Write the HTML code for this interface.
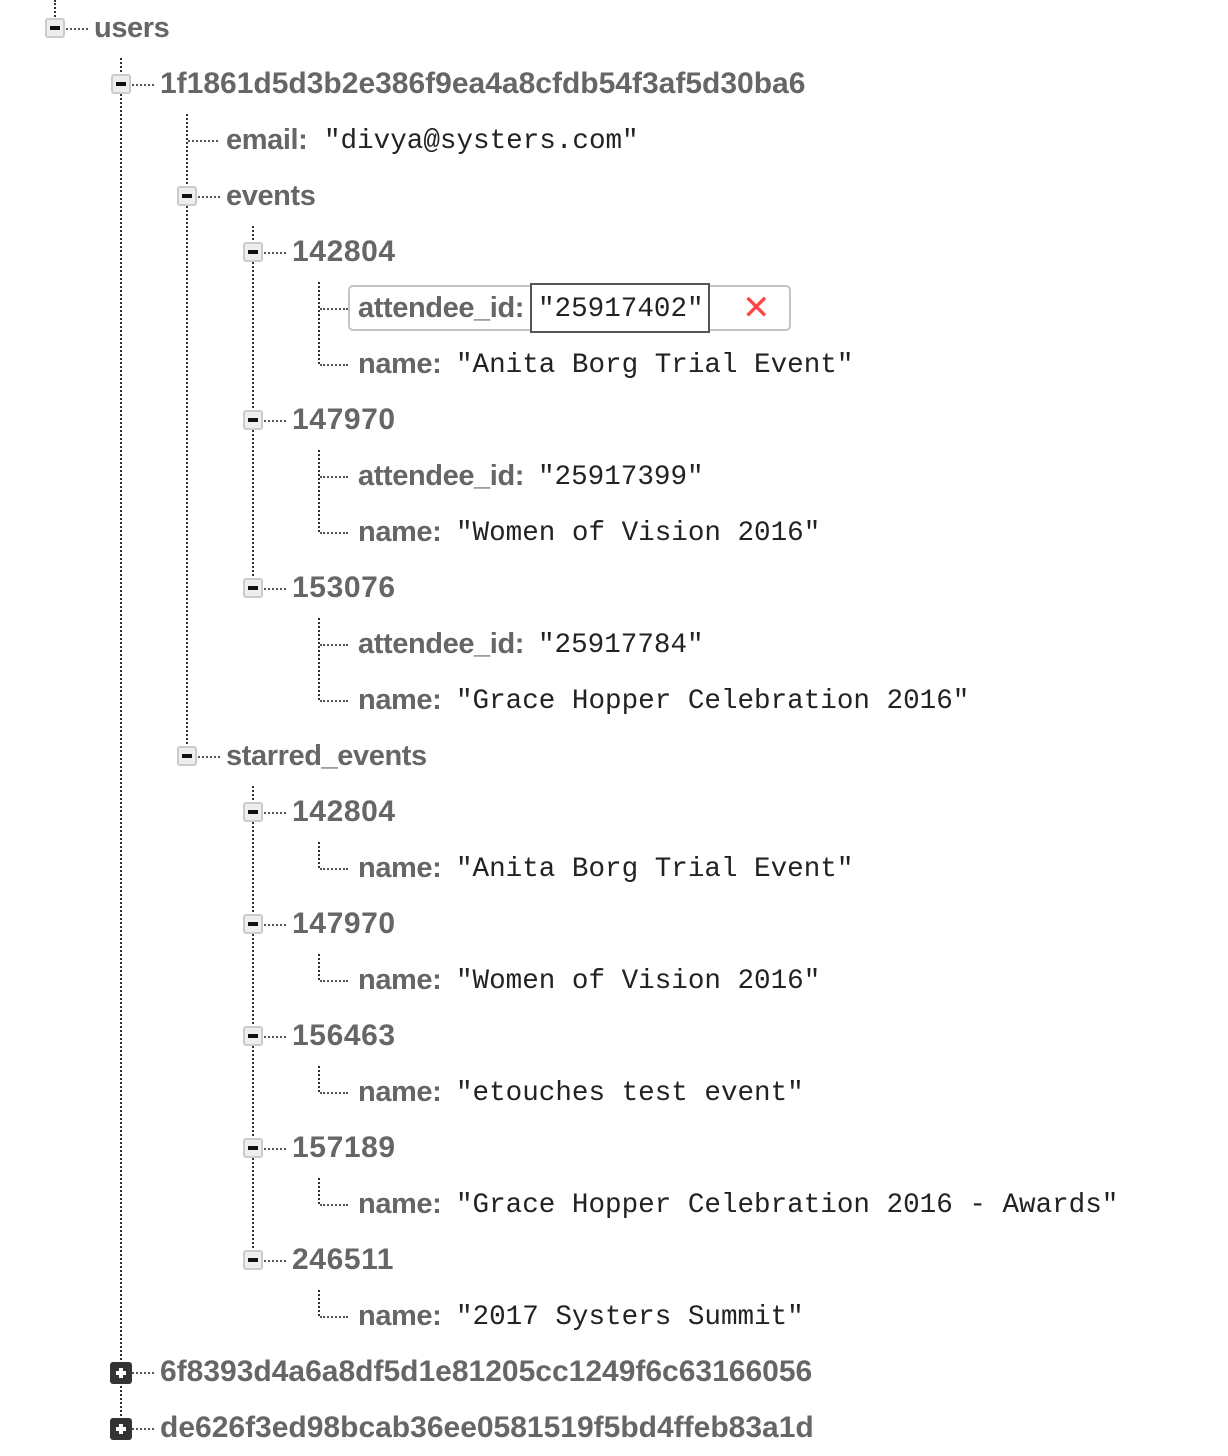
<!DOCTYPE html>
<html><head><meta charset="utf-8"><style>
body{margin:0;width:1228px;height:1456px;background:#fff;position:relative;overflow:hidden;font-family:"Liberation Sans",Arial,sans-serif}
.t{position:absolute;height:40px;line-height:40px;font-size:29px;font-weight:bold;color:#666;white-space:nowrap;letter-spacing:-0.4px;margin-top:1px}
.h{font-size:30px;letter-spacing:0}
.n{font-size:30px;letter-spacing:0.6px}
.v{position:absolute;height:40px;line-height:40px;font-family:"Liberation Mono",monospace;font-size:27.6px;color:#222;white-space:nowrap}
.vl{position:absolute;border-left:2px dotted #333;width:0}
.hl{position:absolute;border-top:2px dotted #555;height:0}
.bx{position:absolute;width:20px;height:20px;box-sizing:border-box;border:2px solid #ccc;background:#eee;border-radius:3px}
.bx:after{content:"";position:absolute;left:3px;top:6px;width:10px;height:4px;background:#111}
.pb{position:absolute;width:22px;height:22px;background:#333;border-radius:3px}
.pb:before{content:"";position:absolute;left:6px;top:9px;width:10px;height:4px;background:#fff}
.pb:after{content:"";position:absolute;left:9px;top:6px;width:4px;height:10px;background:#fff}
</style></head><body>
<div class="vl" style="left:54px;top:0;height:20px"></div>
<div class="vl" style="left:120px;top:58px;height:1370px"></div>
<div class="vl" style="left:186px;top:114px;height:642px"></div>
<div class="vl" style="left:252px;top:226px;height:362px"></div>
<div class="vl" style="left:252px;top:786px;height:474px"></div>
<div class="vl" style="left:318px;top:282px;height:82px"></div>
<div class="vl" style="left:318px;top:450px;height:82px"></div>
<div class="vl" style="left:318px;top:618px;height:82px"></div>
<div class="vl" style="left:318px;top:842px;height:26px"></div>
<div class="vl" style="left:318px;top:954px;height:26px"></div>
<div class="vl" style="left:318px;top:1066px;height:26px"></div>
<div class="vl" style="left:318px;top:1178px;height:26px"></div>
<div class="vl" style="left:318px;top:1290px;height:26px"></div>
<div class="hl" style="left:66px;top:28px;width:22px"></div>
<div class="hl" style="left:132px;top:84px;width:22px"></div>
<div class="hl" style="left:188px;top:140px;width:30px"></div>
<div class="hl" style="left:198px;top:196px;width:22px"></div>
<div class="hl" style="left:264px;top:252px;width:22px"></div>
<div class="hl" style="left:320px;top:308px;width:28px"></div>
<div class="hl" style="left:320px;top:364px;width:28px"></div>
<div class="hl" style="left:264px;top:420px;width:22px"></div>
<div class="hl" style="left:320px;top:476px;width:28px"></div>
<div class="hl" style="left:320px;top:532px;width:28px"></div>
<div class="hl" style="left:264px;top:588px;width:22px"></div>
<div class="hl" style="left:320px;top:644px;width:28px"></div>
<div class="hl" style="left:320px;top:700px;width:28px"></div>
<div class="hl" style="left:198px;top:756px;width:22px"></div>
<div class="hl" style="left:264px;top:812px;width:22px"></div>
<div class="hl" style="left:320px;top:868px;width:28px"></div>
<div class="hl" style="left:264px;top:924px;width:22px"></div>
<div class="hl" style="left:320px;top:980px;width:28px"></div>
<div class="hl" style="left:264px;top:1036px;width:22px"></div>
<div class="hl" style="left:320px;top:1092px;width:28px"></div>
<div class="hl" style="left:264px;top:1148px;width:22px"></div>
<div class="hl" style="left:320px;top:1204px;width:28px"></div>
<div class="hl" style="left:264px;top:1260px;width:22px"></div>
<div class="hl" style="left:320px;top:1316px;width:28px"></div>
<div class="hl" style="left:132px;top:1372px;width:22px"></div>
<div class="hl" style="left:132px;top:1428px;width:22px"></div>
<div class="bx" style="left:45px;top:18px"></div>
<div class="bx" style="left:111px;top:74px"></div>
<div class="bx" style="left:177px;top:186px"></div>
<div class="bx" style="left:243px;top:242px"></div>
<div class="bx" style="left:243px;top:410px"></div>
<div class="bx" style="left:243px;top:578px"></div>
<div class="bx" style="left:177px;top:746px"></div>
<div class="bx" style="left:243px;top:802px"></div>
<div class="bx" style="left:243px;top:914px"></div>
<div class="bx" style="left:243px;top:1026px"></div>
<div class="bx" style="left:243px;top:1138px"></div>
<div class="bx" style="left:243px;top:1250px"></div>
<div class="pb" style="left:110px;top:1362px"></div>
<div class="pb" style="left:110px;top:1418px"></div>
<div style="position:absolute;left:348px;top:285px;width:443px;height:46px;box-sizing:border-box;border:2px solid #c4c4c4;border-radius:5px"></div>
<div style="position:absolute;left:530px;top:283px;width:180px;height:50px;box-sizing:border-box;border:2px solid #555;background:#fff"></div>
<div style="position:absolute;left:742px;top:290px;font-size:34px;line-height:36px;color:#f44;font-family:'DejaVu Sans',sans-serif">✕</div>
<div class="t" style="left:94px;top:7px">users</div>
<div class="t h" style="left:160px;top:63px">1f1861d5d3b2e386f9ea4a8cfdb54f3af5d30ba6</div>
<div class="t" style="left:226px;top:119px">email:</div><div class="v" style="left:324px;top:122px">"divya@systers.com"</div>
<div class="t" style="left:226px;top:175px">events</div>
<div class="t n" style="left:292px;top:231px">142804</div>
<div class="t" style="left:358px;top:287px">attendee_id:</div><div class="v" style="left:538px;top:290px">"25917402"</div>
<div class="t" style="left:358px;top:343px">name:</div><div class="v" style="left:456px;top:346px">"Anita Borg Trial Event"</div>
<div class="t n" style="left:292px;top:399px">147970</div>
<div class="t" style="left:358px;top:455px">attendee_id:</div><div class="v" style="left:538px;top:458px">"25917399"</div>
<div class="t" style="left:358px;top:511px">name:</div><div class="v" style="left:456px;top:514px">"Women of Vision 2016"</div>
<div class="t n" style="left:292px;top:567px">153076</div>
<div class="t" style="left:358px;top:623px">attendee_id:</div><div class="v" style="left:538px;top:626px">"25917784"</div>
<div class="t" style="left:358px;top:679px">name:</div><div class="v" style="left:456px;top:682px">"Grace Hopper Celebration 2016"</div>
<div class="t" style="left:226px;top:735px">starred_events</div>
<div class="t n" style="left:292px;top:791px">142804</div>
<div class="t" style="left:358px;top:847px">name:</div><div class="v" style="left:456px;top:850px">"Anita Borg Trial Event"</div>
<div class="t n" style="left:292px;top:903px">147970</div>
<div class="t" style="left:358px;top:959px">name:</div><div class="v" style="left:456px;top:962px">"Women of Vision 2016"</div>
<div class="t n" style="left:292px;top:1015px">156463</div>
<div class="t" style="left:358px;top:1071px">name:</div><div class="v" style="left:456px;top:1074px">"etouches test event"</div>
<div class="t n" style="left:292px;top:1127px">157189</div>
<div class="t" style="left:358px;top:1183px">name:</div><div class="v" style="left:456px;top:1186px">"Grace Hopper Celebration 2016 - Awards"</div>
<div class="t n" style="left:292px;top:1239px">246511</div>
<div class="t" style="left:358px;top:1295px">name:</div><div class="v" style="left:456px;top:1298px">"2017 Systers Summit"</div>
<div class="t h" style="left:160px;top:1351px">6f8393d4a6a8df5d1e81205cc1249f6c63166056</div>
<div class="t h" style="left:160px;top:1407px">de626f3ed98bcab36ee0581519f5bd4ffeb83a1d</div>
</body></html>
